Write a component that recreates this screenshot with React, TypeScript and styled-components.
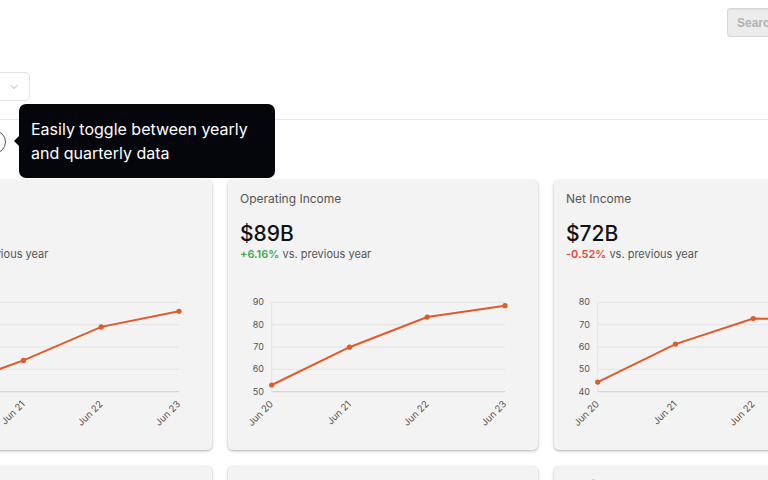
import React from "react"
import styled, { createGlobalStyle } from "styled-components"
import { ChevronDown } from "lucide-react"

const GlobalStyle = createGlobalStyle`
  html, body {
    margin: 0;
    padding: 0;
    background: #ffffff;
    overflow: hidden;
  }
  body {
    width: 768px;
    height: 480px;
    font-family: Inter, "Noto Sans", sans-serif;
    color: #1a1a1a;
  }
`

const Header = styled.header`
  border-bottom: 1px solid #e8e8e8;
  padding-bottom: 18px;
`

const Container = styled.div`
  margin-left: -98px;
  width: 962px;
`

const TopBar = styled.div`
  display: flex;
  justify-content: flex-end;
  padding-top: 8px;
`

const Search = styled.input`
  box-sizing: border-box;
  width: 137px;
  height: 29px;
  padding: 0 9px;
  border: 1px solid #d6d6d6;
  border-radius: 3px;
  background: #ececec;
  box-shadow: inset 0 1px 1px rgba(0, 0, 0, 0.06);
  font-family: "Liberation Sans", Arial, sans-serif;
  font-size: 12px;
  font-weight: 700;
  outline: none;
  &::placeholder {
    color: #b2b2b2;
  }
`

const FilterRow = styled.div`
  display: flex;
  margin-top: 35px;
`

const Dropdown = styled.div`
  box-sizing: border-box;
  width: 128px;
  height: 29px;
  display: flex;
  align-items: center;
  justify-content: flex-end;
  padding-right: 9px;
  border: 1px solid #e3e3e3;
  border-radius: 4px;
  color: #9a9a9a;
`

const ToggleRow = styled.div`
  position: relative;
  display: flex;
  align-items: center;
  gap: 10px;
  padding-top: 10px;
`

const ToggleLabel = styled.span`
  width: 70px;
  font-size: 13px;
  color: #444;
`

const Ring = styled.div`
  box-sizing: border-box;
  width: 24px;
  height: 24px;
  border: 1.5px solid #555;
  border-radius: 50%;
`

const Tooltip = styled.div`
  position: absolute;
  left: 117px;
  top: -16px;
  box-sizing: border-box;
  width: 256px;
  height: 74px;
  padding: 13px 12px;
  background: #05060c;
  border-radius: 7px;
  color: #ffffff;
  font-size: 16px;
  line-height: 24px;
  &::before {
    content: "";
    position: absolute;
    left: -5px;
    top: 32px;
    border-top: 5px solid transparent;
    border-bottom: 5px solid transparent;
    border-right: 5px solid #05060c;
  }
`

const Grid = styled.div`
  display: grid;
  grid-template-columns: repeat(3, 310px);
  gap: 16px;
  margin-top: 26px;
`

const Card = styled.div`
  box-sizing: border-box;
  height: 270px;
  padding: 11px 12px 12px;
  background: #f3f3f3;
  border-radius: 5px;
  box-shadow: 0 1px 3px rgba(0, 0, 0, 0.32);
`

const CardTitle = styled.div`
  font-size: 12px;
  line-height: 16px;
  color: #555;
`

const Value = styled.div`
  margin-top: 14px;
  font-size: 21px;
  line-height: 26px;
  font-weight: 500;
  color: #111;
`

const Change = styled.div`
  font-size: 11px;
  line-height: 14px;
  color: #555;
`

const Delta = styled.span<{ $up: boolean }>`
  font-weight: 600;
  color: ${p => (p.$up ? "#3eaa4a" : "#e2483a")};
`

const ChartSvg = styled.svg`
  display: block;
  margin-top: 29px;
  overflow: visible;
`

interface ChartProps {
  data: number[]
  min: number
  step: number
}

const LABELS = ["Jun 20", "Jun 21", "Jun 22", "Jun 23"]

const Chart = ({ data, min, step }: ChartProps) => {
  const top = 12.3
  const bottom = 101.7
  const left = 31.7
  const right = 265
  const max = min + step * 4
  const y = (v: number) => bottom - ((v - min) / (max - min)) * (bottom - top)
  const x = (i: number) => left + (i * (right - left)) / 3
  const ticks = [0, 1, 2, 3, 4].map(i => min + i * step)
  const points = data.map((v, i) => `${x(i)},${y(v)}`).join(" ")

  return (
    <ChartSvg width={286} height={150}>
      {ticks.map(t => (
        <g key={t}>
          <line x1={left} x2={right} y1={y(t)} y2={y(t)} stroke={t === min ? "#cfcfcf" : "#e3e3e3"} />
          <text x={24} y={y(t) + 3} textAnchor="end" fontSize={9} fill="#555">{t}</text>
        </g>
      ))}
      <line x1={left} x2={left} y1={top} y2={bottom} stroke="#e3e3e3" />
      <polyline points={points} fill="none" stroke="#e05a2c" strokeWidth={2} />
      {data.map((v, i) => (
        <circle key={i} cx={x(i)} cy={y(v)} r={2.6} fill="#e05a2c" />
      ))}
      {LABELS.map((l, i) => (
        <text
          key={l}
          transform={`translate(${x(i) + 2}, ${bottom + 13}) rotate(-45)`}
          textAnchor="end"
          fontSize={9.5}
          fill="#555"
        >
          {l}
        </text>
      ))}
    </ChartSvg>
  )
}

const cards = [
  { title: "Revenue", value: "$212B", delta: "+6.88%", up: true, data: [143, 168, 198, 212], min: 140, step: 20 },
  { title: "Operating Income", value: "$89B", delta: "+6.16%", up: true, data: [53, 69.9, 83.4, 88.5], min: 50, step: 10 },
  { title: "Net Income", value: "$72B", delta: "-0.52%", up: false, data: [44.3, 61.3, 72.7, 72.4], min: 40, step: 10 },
  { title: "Gross Profit", value: "$146B", delta: "+7.31%", up: true, data: [96.9, 115.9, 135.6, 146.1], min: 90, step: 15 },
  { title: "Free Cash Flow", value: "$59B", delta: "-9.15%", up: false, data: [45.2, 56.1, 65.1, 59.5], min: 40, step: 7 },
  { title: "Earnings Per Share", value: "$9.68", delta: "-0.33%", up: false, data: [5.76, 8.05, 9.65, 9.68], min: 5, step: 1.25 },
]

export default function App() {
  return (
    <>
      <GlobalStyle />
      <Header>
        <Container>
          <TopBar>
            <Search placeholder="Search" />
          </TopBar>
          <FilterRow>
            <Dropdown>
              <ChevronDown size={12} strokeWidth={1.5} />
            </Dropdown>
          </FilterRow>
        </Container>
      </Header>
      <Container>
        <ToggleRow>
          <ToggleLabel>Yearly</ToggleLabel>
          <Ring />
          <Tooltip>Easily toggle between yearly and quarterly data</Tooltip>
        </ToggleRow>
        <Grid>
          {cards.map(c => (
            <Card key={c.title}>
              <CardTitle>{c.title}</CardTitle>
              <Value>{c.value}</Value>
              <Change>
                <Delta $up={c.up}>{c.delta}</Delta> vs. previous year
              </Change>
              <Chart data={c.data} min={c.min} step={c.step} />
            </Card>
          ))}
        </Grid>
      </Container>
    </>
  )
}
